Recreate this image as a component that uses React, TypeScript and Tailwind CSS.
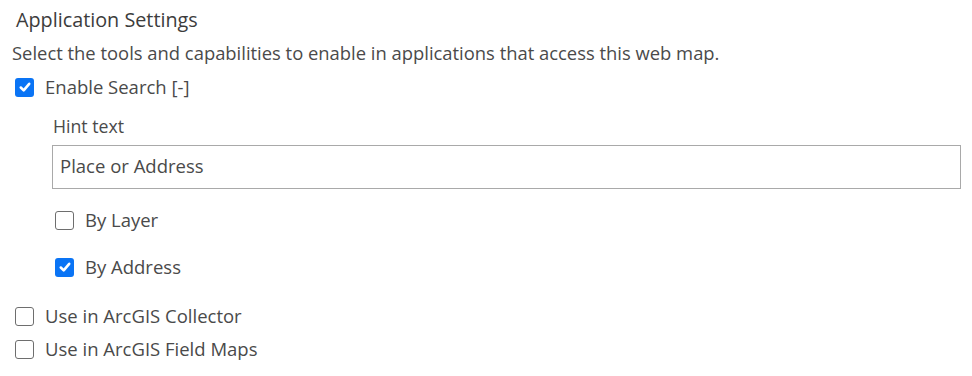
import { useState } from "react";

const font = { fontFamily: "'Open Sans', 'Noto Sans', sans-serif" };

function Box({ checked }: { checked: boolean }) {
  return checked ? (
    <span className="flex h-[19px] w-[19px] shrink-0 items-center justify-center rounded-[3px] bg-[#0a74f5]">
      <svg viewBox="0 0 16 16" className="h-[14px] w-[14px]" fill="none" stroke="#fff" strokeWidth="3" strokeLinecap="round" strokeLinejoin="round">
        <path d="M3.2 8.6 L6.5 11.8 L12.8 4.4" />
      </svg>
    </span>
  ) : (
    <span className="h-[19px] w-[19px] shrink-0 rounded-[3px] border border-[#6e6e6e] bg-white" />
  );
}

function CheckRow({ label, checked, onToggle, className = "" }: { label: string; checked: boolean; onToggle: () => void; className?: string }) {
  return (
    <button onClick={onToggle} className={`flex h-[24px] items-center gap-[11px] text-left ${className}`}>
      <Box checked={checked} />
      <span className="text-[18.5px] leading-[24px] text-[#4a4a4a]">{label}</span>
    </button>
  );
}

export default function App() {
  const [search, setSearch] = useState(true);
  const [byLayer, setByLayer] = useState(false);
  const [byAddress, setByAddress] = useState(true);
  const [collector, setCollector] = useState(false);
  const [fieldMaps, setFieldMaps] = useState(false);

  return (
    <div className="flex h-[376px] w-[972px] flex-col items-start bg-white pl-[12px] pr-[11px]" style={font}>
      {/* Header */}
      <h2 className="mt-[7px] h-[26px] pl-[4px] text-[19.8px] leading-[26px] text-[#3c3c3c]">Application Settings</h2>
      <p className="mt-[8px] h-[24px] whitespace-nowrap text-[18.4px] leading-[24px] text-[#4a4a4a]">
        Select the tools and capabilities to enable in applications that access this web map.
      </p>

      <CheckRow label="Enable Search [-]" checked={search} onToggle={() => setSearch(!search)} className="mt-[10px] pl-[3px]" />

      {/* Search options */}
      <div className="flex w-full flex-col items-start pl-[40px]">
        <div className="mt-[16px] h-[22px] pl-[1px] text-[17.7px] leading-[22px] text-[#4a4a4a]">Hint text</div>
        <input
          defaultValue="Place or Address"
          className="mt-[8px] h-[44px] w-full border border-[#a9a9a9] px-[7px] pb-[4px] text-[18.5px] text-[#4a4a4a] outline-none"
          style={font}
        />
        <CheckRow label="By Layer" checked={byLayer} onToggle={() => setByLayer(!byLayer)} className="mt-[19px] pl-[3px]" />
        <CheckRow label="By Address" checked={byAddress} onToggle={() => setByAddress(!byAddress)} className="mt-[23px] pl-[3px]" />
      </div>

      <CheckRow label="Use in ArcGIS Collector" checked={collector} onToggle={() => setCollector(!collector)} className="mt-[25px] pl-[3px]" />
      <CheckRow label="Use in ArcGIS Field Maps" checked={fieldMaps} onToggle={() => setFieldMaps(!fieldMaps)} className="mt-[9px] pl-[3px]" />
    </div>
  );
}
